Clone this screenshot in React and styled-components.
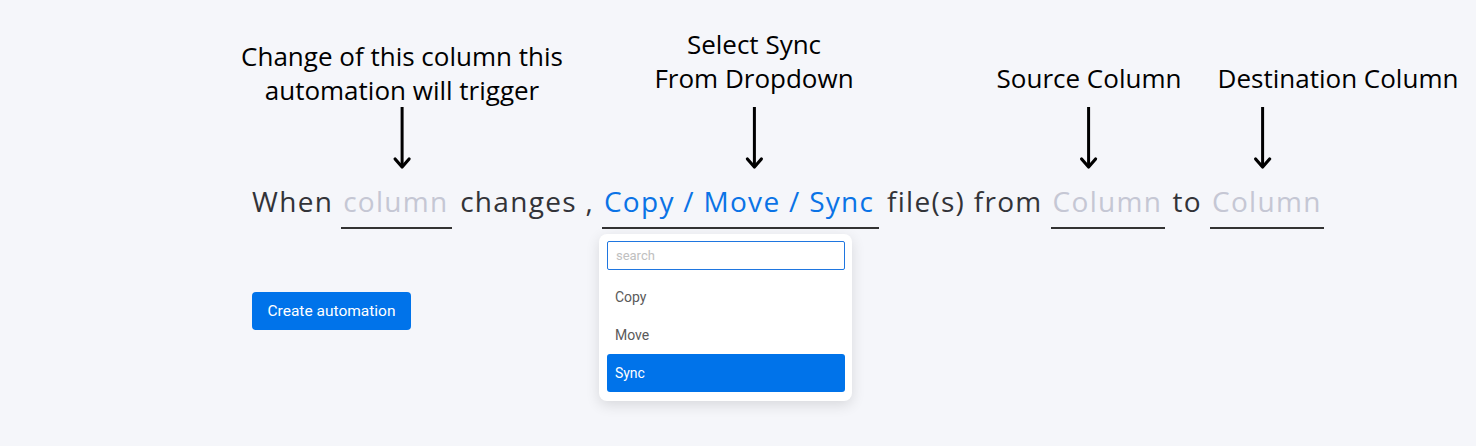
import React from 'react';
import styled, { createGlobalStyle } from 'styled-components';

const GlobalStyle = createGlobalStyle`
  body {
    margin: 0;
    background: #f5f6fa;
  }
`;

const Canvas = styled.div`
  position: relative;
  width: 1476px;
  height: 446px;
  padding: 181px 0 0 252px;
  box-sizing: border-box;
  background: #f5f6fa;
`;

// a label with its arrow, pinned above the blank it explains
const Annotation = styled.div`
  position: absolute;
  left: ${props => props.x}px;
  bottom: 276px;
  transform: translateX(-50%);
  display: flex;
  flex-direction: column;
  align-items: center;
  gap: ${props => props.gap}px;
`;

const Label = styled.div`
  font-family: "Open Sans", sans-serif;
  font-size: 26px;
  line-height: 34px;
  color: #000;
  text-align: center;
  white-space: nowrap;
  transform: translateX(${props => props.shift || 0}px);
`;

const Arrow = () => (
  <svg width="20" height="63" viewBox="0 0 20 63">
    <line x1="10" y1="0" x2="10" y2="60" stroke="#000" strokeWidth="3" />
    <polyline points="3,52 10,60 17,52" fill="none" stroke="#000" strokeWidth="3.2" strokeLinecap="round" strokeLinejoin="round" />
  </svg>
);

const Sentence = styled.div`
  display: flex;
  align-items: baseline;
  gap: 8px;
  font-family: "Open Sans", sans-serif;
  font-size: 28px;
  letter-spacing: 1.3px;
  line-height: 40px;
  color: #323338;
`;

const Word = styled.span`
  white-space: nowrap;
`;

const SlotWrap = styled.div`
  position: relative;
`;

const Slot = styled.div`
  width: ${props => props.width}px;
  box-sizing: border-box;
  padding: 0 2px 6px;
  border-bottom: 2px solid #333;
  white-space: nowrap;
  color: ${props => (props.chosen ? '#0a73e6' : '#c5c7d4')};
`;

const Dropdown = styled.div`
  position: absolute;
  left: -3px;
  top: calc(100% + 5px);
  width: 253px;
  box-sizing: border-box;
  padding: 7px 7px 9px 8px;
  background: #fff;
  border-radius: 8px;
  box-shadow: 0 4px 14px rgba(0, 0, 0, 0.12);
  font-family: Roboto, sans-serif;
  letter-spacing: 0;
  line-height: normal;
  z-index: 2;
`;

const Search = styled.input`
  display: block;
  width: 238px;
  height: 29px;
  box-sizing: border-box;
  margin: 0 0 8px;
  padding: 0 8px;
  border: 1px solid #1f76e0;
  border-radius: 2px;
  outline: none;
  font-family: Roboto, sans-serif;
  font-size: 13px;
  color: #333;
  &::placeholder {
    color: #c0c0c0;
  }
`;

const Option = styled.div`
  width: 238px;
  height: 38px;
  display: flex;
  align-items: center;
  padding-left: 8px;
  box-sizing: border-box;
  border-radius: 3px;
  font-size: 14px;
  color: ${props => (props.active ? '#fff' : '#5a5a5a')};
  background: ${props => (props.active ? '#0073ea' : 'transparent')};
`;

const CreateButton = styled.button`
  display: block;
  margin-top: 63px;
  width: 159px;
  height: 38px;
  border: none;
  border-radius: 4px;
  background: #0073ea;
  color: #fff;
  font-family: Roboto, sans-serif;
  font-size: 15.5px;
`;

export default function App() {
  return (
    <>
      <GlobalStyle />
      <Canvas>
        <Annotation x={402} gap={0}>
          <Label>Change of this column this<br />automation will trigger</Label>
          <Arrow />
        </Annotation>
        <Annotation x={754} gap={12}>
          <Label>Select Sync<br />From Dropdown</Label>
          <Arrow />
        </Annotation>
        <Annotation x={1089} gap={12}>
          <Label>Source Column</Label>
          <Arrow />
        </Annotation>
        <Annotation x={1263} gap={12}>
          <Label shift={75}>Destination Column</Label>
          <Arrow />
        </Annotation>

        <Sentence>
          <Word>When</Word>
          <Slot width={111}>column</Slot>
          <Word>changes ,</Word>
          <SlotWrap>
            <Slot width={277} chosen>Copy / Move / Sync</Slot>
            <Dropdown>
              <Search placeholder="search" />
              <Option>Copy</Option>
              <Option>Move</Option>
              <Option active>Sync</Option>
            </Dropdown>
          </SlotWrap>
          <Word>file(s) from</Word>
          <Slot width={114}>Column</Slot>
          <Word>to</Word>
          <Slot width={114}>Column</Slot>
        </Sentence>

        <CreateButton>Create automation</CreateButton>
      </Canvas>
    </>
  );
}
